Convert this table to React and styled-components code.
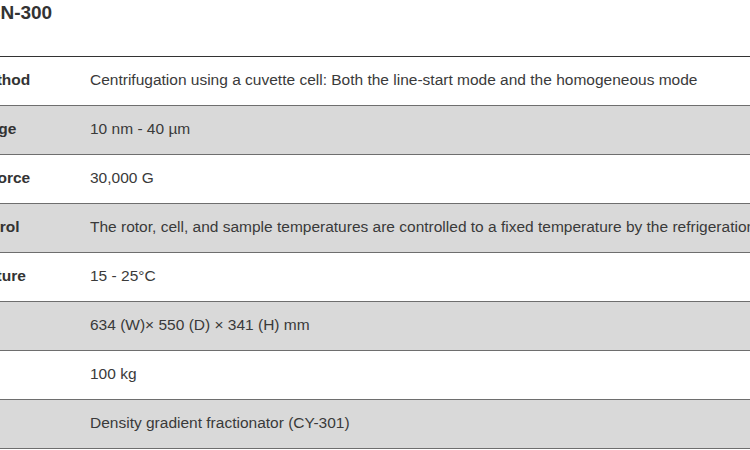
import React from "react";
import styled, { createGlobalStyle } from "styled-components";

const GlobalStyle = createGlobalStyle`
  html, body {
    margin: 0;
    padding: 0;
    overflow: hidden;
    background: #fff;
  }
  body {
    font-family: "Liberation Sans", Arial, Helvetica, sans-serif;
    color: #333;
  }
`;

const Page = styled.div`
  width: 1200px;
  margin-left: -130px;
`;

const Title = styled.h2`
  margin: 0 0 32px 103px;
  padding-top: 2px;
  font-size: 19px;
  line-height: 22px;
  font-weight: 700;
  color: #333;
`;

const SpecTable = styled.div`
  border-top: 1px solid #333;
`;

const Row = styled.div`
  display: grid;
  grid-template-columns: 220px 1fr;
  align-items: center;
  height: 48px;
  border-bottom: 1px solid #6e6e6e;
  background: ${props => (props.shaded ? "#d9d9d9" : "#fff")};
`;

const Label = styled.div`
  font-size: 15.5px;
  font-weight: 700;
  color: #333;
  white-space: nowrap;
  margin-top: -2px;
`;

const Value = styled.div`
  font-size: 15.5px;
  color: #3a3a3a;
  white-space: nowrap;
  margin-top: -2px;
`;

const specs = [
  ["Measurement method", "Centrifugation using a cuvette cell: Both the line-start mode and the homogeneous mode"],
  ["Measurement range", "10 nm - 40 µm"],
  ["Max. centrifugal force", "30,000 G"],
  ["Temperature control", "The rotor, cell, and sample temperatures are controlled to a fixed temperature by the refrigeration unit."],
  ["Ambient temperature", "15 - 25°C"],
  ["Dimensions", "634 (W)× 550 (D) × 341 (H) mm"],
  ["Weight", "100 kg"],
  ["Option", "Density gradient fractionator (CY-301)"],
];

const App = () => (
  <>
    <GlobalStyle />
    <Page>
      <Title>DCN-300</Title>
      <SpecTable>
        {specs.map(([label, value], i) => (
          <Row key={label} shaded={i % 2 === 1}>
            <Label>{label}</Label>
            <Value>{value}</Value>
          </Row>
        ))}
      </SpecTable>
    </Page>
  </>
);

export default App;
